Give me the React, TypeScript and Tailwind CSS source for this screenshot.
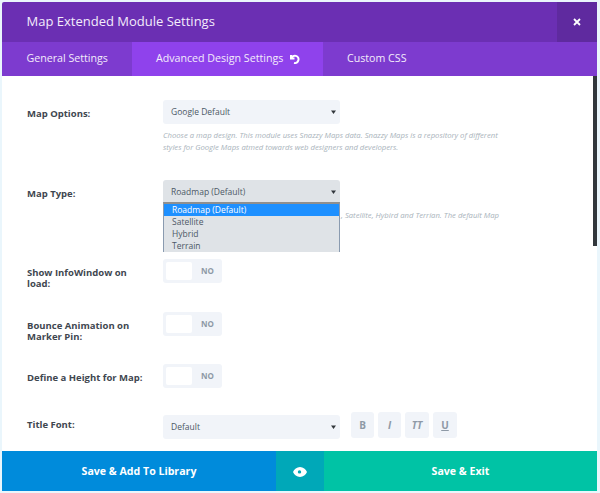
const font = { fontFamily: '"Open Sans", sans-serif' };

const Caret = () => (
  <svg width="5" height="4" viewBox="0 0 5 4" className="shrink-0">
    <path d="M0 0.5h5L2.5 4z" fill="#32373c" />
  </svg>
);

const Select = ({ value, dark }: { value: string; dark?: boolean }) => (
  <div
    className={`flex h-6 w-[177px] shrink-0 items-center justify-between rounded-[3px] pl-2 pr-[4px] text-[8.5px] text-[#4c5866] ${
      dark ? "bg-[#dfe3e7]" : "bg-[#f1f4f9]"
    }`}
  >
    <span>{value}</span>
    <Caret />
  </div>
);

const Toggle = () => (
  <div className="flex h-6 w-[59px] shrink-0 items-center rounded-[3px] bg-[#f1f4f9]">
    <div className="ml-[3px] h-[18px] w-[26px] rounded-[2px] bg-white" />
    <span className="ml-[9px] text-[8px] font-bold text-[#8e99a6]">NO</span>
  </div>
);

const Label = ({ children }: { children: React.ReactNode }) => (
  <div className="w-[136px] shrink-0 pr-3 text-[9.5px] font-bold leading-[11px] text-[#3f4750]">
    {children}
  </div>
);

const StyleBtn = ({ label, w }: { label: string; w: string }) => (
  <div className={`flex h-[26px] items-center justify-center rounded-[3px] bg-[#f1f4f9] text-[10px] font-bold text-[#8e99a6] ${w}`}>
    {label}
  </div>
);

export default function App() {
  return (
    <div style={font} className="flex h-[493px] w-[600px] flex-col overflow-hidden bg-[#eaf6fc] pb-[2px] pl-[2px] pr-[3px] pt-[2px]">
      {/* header */}
      <div className="flex h-10 shrink-0 items-center justify-between rounded-t-[2px] bg-[#6b2fb3] text-white">
        <div className="pl-[24.5px] text-[13px] text-[#f3ecfb]">Map Extended Module Settings</div>
        <div className="flex h-10 w-10 items-center justify-center bg-[#5f2a9f]">
          <svg width="8" height="8" viewBox="0 0 8 8">
            <path d="M1 1l6 6M7 1L1 7" stroke="#fff" strokeWidth="1.8" />
          </svg>
        </div>
      </div>

      {/* tabs */}
      <div className="flex h-[34px] shrink-0 items-center bg-[#7d3bcf] text-[10.65px] text-[#f3ecfb]">
        <div className="flex h-full w-[130px] items-center pl-[24.5px]">General Settings</div>
        <div className="flex h-full w-[191px] items-center gap-[7px] bg-[#8f42ec] pl-6">
          Advanced Design Settings
          <svg width="10" height="10" viewBox="0 0 10 10" fill="none">
            <path d="M1 1v3.500h3.500M1.300 4.200A3.700 3.700 0 1 1 4 9" stroke="#fff" strokeWidth="2" />
          </svg>
        </div>
        <div className="pl-6">Custom CSS</div>
      </div>

      {/* settings */}
      <div className="relative flex min-h-0 flex-1 flex-col overflow-hidden bg-white pl-[25px] pt-6">
        <div className="flex">
          <Label><div className="pt-[8px]">Map Options:</div></Label>
          <div>
            <Select value="Google Default" />
            <p className="mt-[5px] w-[345px] text-[7.7px] italic leading-3 text-[#a9b3bb]">
              Choose a map design. This module uses Snazzy Maps data. Snazzy Maps is a repository of different styles for Google Maps atmed towards web designers and developers.
            </p>
          </div>
        </div>

        <div className="mt-[27px] flex">
          <Label><div className="pt-[8px]">Map Type:</div></Label>
          <div className="relative h-[55px]">
            <Select value="Roadmap (Default)" dark />
            <p className="mt-[5px] whitespace-nowrap pl-[178px] text-[7.7px] italic leading-3 text-[#a9b3bb]">
              , Satellite, Hybird and Terrian. The default Map
            </p>
            <div className="absolute left-0 top-[22px] h-[50px] w-[177px] overflow-hidden border border-b-0 border-[#8a9bb0] border-t-2 border-t-[#8f8f8f] bg-[#dfe3e7] text-[8.5px] leading-3 text-[#4c5866]">
              <div className="bg-[#1e90ff] pl-2 text-white">Roadmap (Default)</div>
              <div className="pl-2">Satellite</div>
              <div className="pl-2">Hybrid</div>
              <div className="pl-2">Terrain</div>
            </div>
          </div>
        </div>

        <div className="mt-6 flex">
          <Label><div className="pt-[8px]">Show InfoWindow on load:</div></Label>
          <Toggle />
        </div>

        <div className="mt-[23px] flex">
          <Label><div className="pt-[8px]">Bounce Animation on Marker Pin:</div></Label>
          <Toggle />
        </div>

        <div className="mt-[22px] flex">
          <Label><div className="pt-[8px]">Define a Height for Map:</div></Label>
          <Toggle />
        </div>

        <div className="mt-[27px] flex">
          <Label><div className="pt-[4px]">Title Font:</div></Label>
          <Select value="Default" />
          <div className="ml-[11px] flex -translate-y-[3px] gap-[4px]">
            <StyleBtn label="B" w="w-[23px]" />
            <StyleBtn label="I" w="w-[23px] italic" />
            <StyleBtn label="TT" w="w-6 italic" />
            <StyleBtn label="U" w="w-6 underline" />
          </div>
        </div>

        {/* scrollbar */}
        <div className="absolute right-0 top-0 h-[170px] w-1 bg-[#32373c]" />
      </div>

      {/* footer */}
      <div className="flex h-10 shrink-0 pt-0 text-[10.6px] font-bold text-white">
        <div className="flex w-[274px] items-center justify-center bg-[#008bdb] pt-[1px]">Save &amp; Add To Library</div>
        <div className="flex w-12 items-center justify-center bg-[#00a8b8] pt-[1px]">
          <svg width="14" height="10" viewBox="0 0 14 10">
            <path fillRule="evenodd" d="M7 0C3.800 0 1.200 2.200 0 5c1.200 2.800 3.800 5 7 5s5.800-2.200 7-5c-1.200-2.800-3.800-5-7-5zM6.500 3.200a1.700 1.700 0 1 1 0 3.400 1.700 1.700 0 0 1 0-3.400z" fill="#fff" />
          </svg>
        </div>
        <div className="flex flex-1 items-center justify-center bg-[#00c3a5] pt-[1px]">Save &amp; Exit</div>
      </div>
    </div>
  );
}
